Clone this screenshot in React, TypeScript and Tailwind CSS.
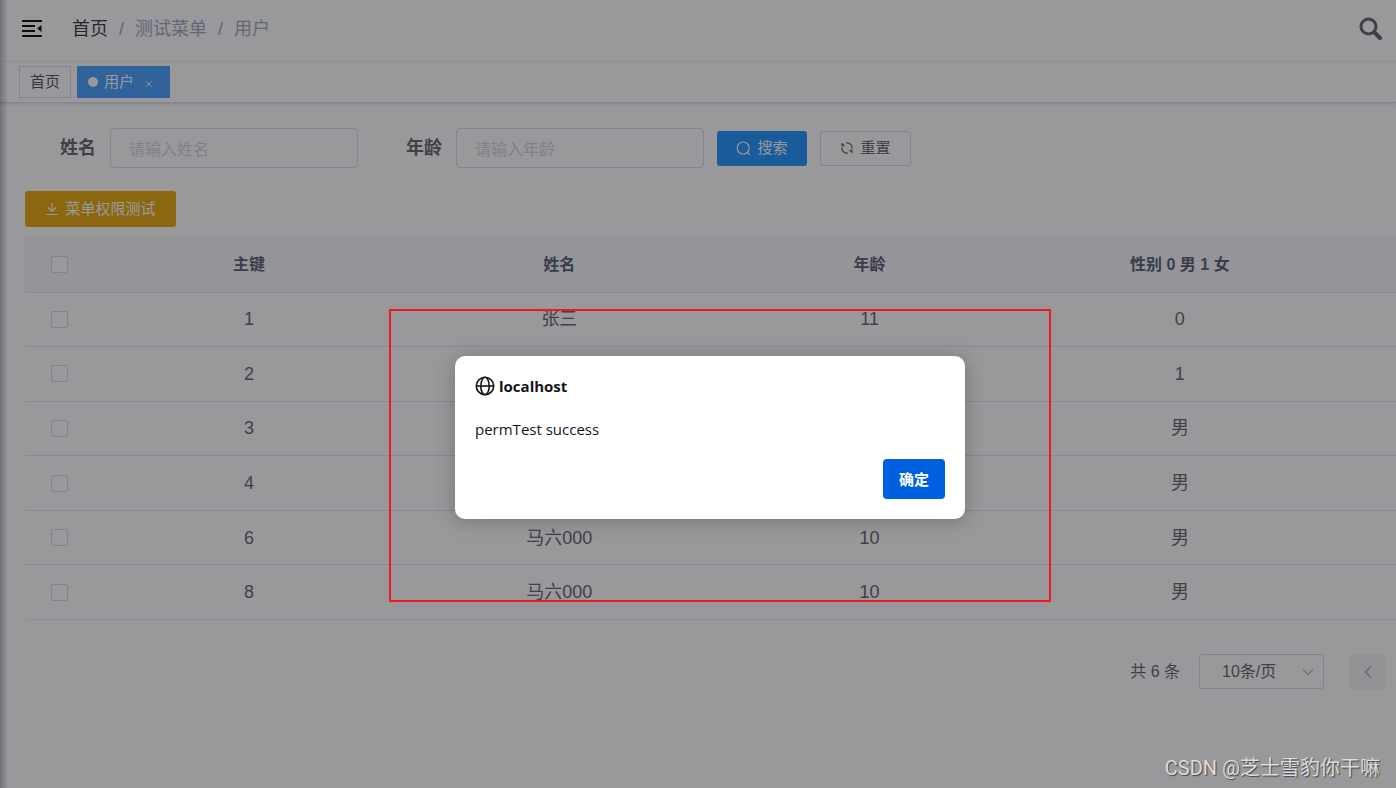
import React from 'react';

type Row = { id: number; name: string; age: string; sex: string };

const rows: Row[] = [
  { id: 1, name: '张三', age: '11', sex: '0' },
  { id: 2, name: '', age: '', sex: '1' },
  { id: 3, name: '', age: '', sex: '男' },
  { id: 4, name: '', age: '', sex: '男' },
  { id: 6, name: '马六000', age: '10', sex: '男' },
  { id: 8, name: '马六000', age: '10', sex: '男' },
];

function FoldIcon() {
  return (
    <svg width="20" height="18" viewBox="0 0 20 18" fill="#000" aria-hidden="true">
      <path d="M0 0h20v2H0zM0 5h13v2H0zM0 10h13v2H0zM0 15h20v2H0zM19.5 5v7L15 8.5z" />
    </svg>
  );
}

function BoldSearchIcon() {
  return (
    <svg width="24" height="24" viewBox="0 0 24 24" fill="none" stroke="#5a5e66" aria-hidden="true">
      <circle cx="9.5" cy="9.5" r="7.5" strokeWidth="3" />
      <path d="M15.5 15.5l5.5 5.5" strokeWidth="4" strokeLinecap="round" />
    </svg>
  );
}

function SearchIcon() {
  return (
    <svg width="15" height="15" viewBox="0 0 15 15" fill="none" stroke="currentColor" strokeWidth="1.2" aria-hidden="true">
      <circle cx="7.2" cy="7" r="6" />
      <path d="M11.4 11.3l2 2.2" strokeLinecap="round" />
    </svg>
  );
}

function RefreshIcon() {
  return (
    <svg width="14" height="14" viewBox="0 0 14 14" fill="none" stroke="currentColor" strokeWidth="1.2" aria-hidden="true">
      <path d="M6 1.9A5.2 5.2 0 0 1 12.1 7.8M8 12.1A5.2 5.2 0 0 1 1.9 6.2" />
      <path d="M2 2v2.6h2.6M2.2 4.6A5.2 5.2 0 0 1 3.6 3M12 12V9.4H9.4M11.8 9.4A5.2 5.2 0 0 1 10.4 11" />
    </svg>
  );
}

function DownloadIcon() {
  return (
    <svg width="14" height="14" viewBox="0 0 14 14" fill="none" stroke="currentColor" strokeWidth="1.1" aria-hidden="true">
      <path d="M7 1v8.3M3 5.5l4 4 4-4M1 12.5h12" />
    </svg>
  );
}

function GlobeIcon() {
  return (
    <svg width="20" height="20" viewBox="0 0 20 20" fill="none" stroke="#15141a" strokeWidth="1.6" aria-hidden="true">
      <circle cx="10" cy="10" r="8.7" />
      <ellipse cx="10" cy="10" rx="4.2" ry="8.7" />
      <path d="M1.3 10h17.4" />
    </svg>
  );
}

function Field({ id, label, placeholder }: { id: string; label: string; placeholder: string }) {
  return (
    <div className="flex items-center gap-3.5">
      <label htmlFor={id} className="text-lg font-bold whitespace-nowrap text-[#606266]">
        {label}
      </label>
      <input
        id={id}
        type="text"
        placeholder={placeholder}
        className="h-10 w-[248px] rounded border border-[#d8dae0] bg-white px-[18px] pt-1 text-base placeholder:text-[#d4d5dc]"
      />
    </div>
  );
}

function Check({ label }: { label: string }) {
  return (
    <input
      type="checkbox"
      aria-label={label}
      className="mx-auto block size-[17px] appearance-none rounded-xs border border-[#d8dae0] bg-white"
    />
  );
}

export default function App() {
  return (
    <div className="relative min-h-screen overflow-hidden bg-white font-['Liberation_Sans','Noto_Sans_CJK_SC',sans-serif] text-[#606266]">
      <div className="absolute inset-y-0 left-0 w-2 bg-linear-to-r from-[rgba(0,21,41,0.3)] to-transparent" />

      <header className="flex h-[62px] items-center justify-between border-b border-[#f4f4f6] pr-[13px] pb-[3px] pl-[22px]">
        <div className="flex items-center gap-[30px]">
          <button type="button" aria-label="折叠菜单">
            <FoldIcon />
          </button>
          <nav className="flex items-center gap-[11px] text-lg text-[#97a8be]">
            <a href="#home" className="text-[#303133]">首页</a>
            <span>/</span>
            <span>测试菜单</span>
            <span>/</span>
            <span>用户</span>
          </nav>
        </div>
        <button type="button" aria-label="搜索菜单">
          <BoldSearchIcon />
        </button>
      </header>

      <div className="flex h-[41px] items-center gap-1.5 border-b border-[#d8dce5] pl-[19px] text-[15px] shadow-[0_1px_3px_0_rgba(0,0,0,0.14)]">
        <a href="#home" className="flex h-8 items-center border border-[#d8dce5] px-2.5 text-[#495060]">
          首页
        </a>
        <a href="#user" className="flex h-8 items-center bg-[#409eff] pr-2.5 pl-[11px] text-white">
          <span className="mr-1.5 size-2.5 rounded-full bg-white" />
          用户
          <svg width="20" height="8" viewBox="0 0 20 8" fill="none" stroke="currentColor" className="mt-1 ml-1.5" aria-hidden="true">
            <path d="M6 1.2l5.6 5.6M11.6 1.2L6 6.8" />
          </svg>
        </a>
      </div>

      <main className="pt-[25px] pl-[25px]">
        <form className="flex items-center pl-[35px]" onSubmit={(e) => e.preventDefault()}>
          <div className="flex gap-12">
            <Field id="name" label="姓名" placeholder="请输入姓名" />
            <Field id="age" label="年龄" placeholder="请输入年龄" />
          </div>
          <button type="submit" className="ml-[13px] flex h-[35px] w-[90px] items-center justify-center gap-1.5 rounded-[3px] bg-[#1890ff] text-[15px] text-white">
            <SearchIcon />
            搜索
          </button>
          <button type="reset" className="ml-[13px] flex h-[35px] w-[91px] items-center justify-center gap-1.5 rounded-[3px] border border-[#d8dae0] text-[15px]">
            <RefreshIcon />
            重置
          </button>
        </form>

        <button type="button" className="mt-[23px] flex h-9 w-[151px] items-center justify-center gap-1.5 rounded-[3px] bg-[#e6a700] text-[15px] text-white">
          <DownloadIcon />
          菜单权限测试
        </button>

        <table className="mt-[11px] h-[382px] w-full table-fixed border-collapse text-center">
          <colgroup>
            <col className="w-[69px]" />
            <col className="w-[22.63%]" />
            <col className="w-[22.63%]" />
            <col className="w-[22.63%]" />
            <col className="w-[22.63%]" />
            <col />
          </colgroup>
          <thead>
            <tr className="h-[54px] border-b border-[#dfe6ec] bg-[#f8f8f9] text-base text-[#515a6e]">
              <th><Check label="全选" /></th>
              <th>主键</th>
              <th>姓名</th>
              <th>年龄</th>
              <th>性别 0 男 1 女</th>
              <th />
            </tr>
          </thead>
          <tbody className="text-lg">
            {rows.map((r) => (
              <tr key={r.id} className="border-b border-[#dfe6ec] last:border-[#ebeef5]">
                <td><Check label={`选择 ${r.id}`} /></td>
                <td>{r.id}</td>
                <td>{r.name}</td>
                <td>{r.age}</td>
                <td>{r.sex}</td>
                <td />
              </tr>
            ))}
          </tbody>
        </table>

        <div className="mt-[34px] flex items-center justify-end pr-2.5 text-base">
          <span>共 6 条</span>
          <div className="relative ml-[19px]">
            <select aria-label="每页条数" className="h-[35px] w-[125px] appearance-none rounded-[3px] border border-[#d8dae0] bg-white pl-[22px]">
              <option>10条/页</option>
            </select>
            <svg width="12" height="8" viewBox="0 0 12 8" fill="none" stroke="#b4b8c0" strokeWidth="1.2" className="pointer-events-none absolute top-3.5 right-2.5" aria-hidden="true">
              <path d="M1 1.5l5 5 5-5" />
            </svg>
          </div>
          <button type="button" aria-label="上一页" className="ml-[25px] flex h-[35px] w-[37px] items-center justify-center rounded-sm bg-[#f4f4f5]">
            <svg width="8" height="12" viewBox="0 0 8 12" fill="none" stroke="#b4b8c0" strokeWidth="1.8" aria-hidden="true">
              <path d="M6.8 0.6L1.4 6l5.4 5.4" />
            </svg>
          </button>
        </div>
      </main>

      <div className="absolute inset-0 flex items-start justify-center bg-[rgba(28,27,34,0.45)] pt-[356px] pl-6">
        <section
          role="alertdialog"
          aria-labelledby="dialog-title"
          aria-describedby="dialog-message"
          className="flex w-[510px] flex-col rounded-[10px] bg-white p-5 font-['Open_Sans','Noto_Sans_CJK_SC',sans-serif] text-[15px] text-[#15141a] shadow-[0_2px_20px_rgba(0,0,0,0.25)]"
        >
          <h2 id="dialog-title" className="flex h-5 items-center gap-1 font-bold">
            <GlobeIcon />
            localhost
          </h2>
          <p id="dialog-message" className="mt-[22px] leading-[23px]">permTest success</p>
          <button type="button" className="mt-[18px] h-10 w-[62px] self-end rounded bg-[#0061e0] font-bold text-white">
            确定
          </button>
        </section>
      </div>

      <div className="pointer-events-none absolute top-[309px] left-[389px] h-[293px] w-[662px] border-2 border-[#ed1c24]" />
      <p className="absolute right-4 bottom-1.5 font-['Roboto','Noto_Sans_CJK_SC',sans-serif] text-xl text-[#dcdcdc] [text-shadow:1px_1px_1px_#444]">
        CSDN @芝士雪豹你干嘛
      </p>
    </div>
  );
}
